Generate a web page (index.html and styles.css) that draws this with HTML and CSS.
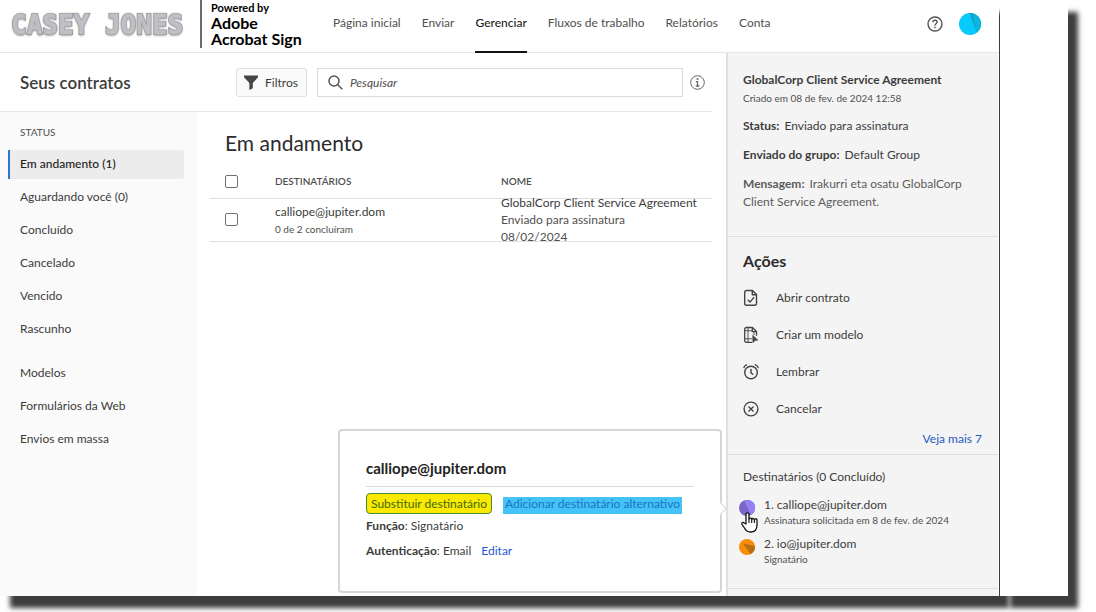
FILE: index.html
```html
<!DOCTYPE html>
<html lang="pt-BR">
<head>
<meta charset="utf-8">
<meta name="viewport" content="width=device-width, initial-scale=1">
<title>Seus contratos</title>
<link rel="stylesheet" href="styles.css">
</head>
<body>
<div class="page">
  <div class="app">
    <header class="topbar">
      <div class="brand">
        <span class="brand-name">CASEY JONES</span>
        <div class="powered"><span class="powered-by">Powered by</span><span>Adobe</span><span>Acrobat Sign</span></div>
      </div>
      <nav class="nav">
        <a href="#">Página inicial</a>
        <a href="#">Enviar</a>
        <a href="#" class="active">Gerenciar</a>
        <a href="#">Fluxos de trabalho</a>
        <a href="#">Relatórios</a>
        <a href="#">Conta</a>
      </nav>
      <div class="account">
        <button class="plain" aria-label="Ajuda">
          <svg width="16" height="16" viewBox="0 0 16 16" fill="none" stroke="#555" stroke-width="1.4"><circle cx="8" cy="8" r="7"/><path d="M5.9 6.3c0-1.3.9-2.1 2.1-2.1s2.1.8 2.1 1.9c0 1.5-2.1 1.7-2.1 3.3"/><path d="M8 10.8v1.5"/></svg>
        </button>
        <button class="plain" aria-label="Perfil">
          <svg width="22" height="22" viewBox="0 0 22 22"><circle cx="11" cy="11" r="11" fill="#04cbfb"/><path d="M10 0A11 11 0 0 1 18 19.400Z" fill="#12a5c9"/><path d="M14 .4A11 11 0 0 1 18 19.400Z" fill="#0bb6e0"/></svg>
        </button>
      </div>
    </header>

    <div class="workspace">
      <div class="subhead">
        <h1>Seus contratos</h1>
        <button class="filter">
          <svg width="14" height="15" viewBox="0 0 14 15"><path d="M0 .5h14v1.700L8.800 8v5.200L5.400 15V8L0 2.200z" fill="#444"/></svg>
          Filtros
        </button>
        <label class="search">
          <svg width="15" height="15" viewBox="0 0 15 15" fill="none" stroke="#555" stroke-width="1.500"><circle cx="6" cy="6" r="5"/><path d="M9.700 9.700l4.600 4.600"/></svg>
          <input type="text" placeholder="Pesquisar" aria-label="Pesquisar">
        </label>
        <button class="plain" aria-label="Informações">
          <svg width="15" height="15" viewBox="0 0 15 15" fill="none" stroke="#666"><circle cx="7.500" cy="7.500" r="6.800"/><path d="M7.500 3.200v1.700" stroke-width="1.700"/><path d="M5.900 6.600h1.600v4.200M5.700 11h3.600" stroke-width="1.300"/></svg>
        </button>
      </div>

      <div class="columns">
        <aside class="sidebar">
          <h2>STATUS</h2>
          <ul>
            <li><a href="#" class="current">Em andamento (1)</a></li>
            <li><a href="#">Aguardando você (0)</a></li>
            <li><a href="#">Concluído</a></li>
            <li><a href="#">Cancelado</a></li>
            <li><a href="#">Vencido</a></li>
            <li><a href="#">Rascunho</a></li>
          </ul>
          <ul>
            <li><a href="#">Modelos</a></li>
            <li><a href="#">Formulários da Web</a></li>
            <li><a href="#">Envios em massa</a></li>
          </ul>
        </aside>

        <main class="list">
          <h2>Em andamento</h2>
          <table>
            <thead>
              <tr>
                <th class="pick"><input type="checkbox" aria-label="Selecionar todos"></th>
                <th class="who">DESTINATÁRIOS</th>
                <th>NOME</th>
              </tr>
            </thead>
            <tbody>
              <tr>
                <td class="pick"><input type="checkbox" aria-label="Selecionar contrato"></td>
                <td class="who"><div class="cell"><span>calliope@jupiter.dom</span><small>0 de 2 concluíram</small></div></td>
                <td><div class="cell name"><span>GlobalCorp Client Service Agreement</span><span class="dim">Enviado para assinatura</span><span class="dim">08/02/2024</span></div></td>
              </tr>
            </tbody>
          </table>
        </main>
      </div>
    </div>

    <aside class="details">
      <section class="summary">
        <h2>GlobalCorp Client Service Agreement</h2>
        <p class="created">Criado em 08 de fev. de 2024 12:58</p>
        <p><b>Status:</b> Enviado para assinatura</p>
        <p><b>Enviado do grupo:</b> Default Group</p>
        <p class="message"><b>Mensagem:</b> Irakurri eta osatu GlobalCorp Client Service Agreement.</p>
      </section>
      <section class="actions">
        <h2>Ações</h2>
        <button>
          <svg width="16" height="18" viewBox="0 0 16 18" fill="none" stroke="#444" stroke-width="1.400" stroke-linejoin="round"><path d="M3.500 1.500h6l4 4v9.200a1.600 1.600 0 0 1-1.600 1.600H3.300a1.600 1.600 0 0 1-1.600-1.600V3.200a1.700 1.700 0 0 1 1.800-1.700z"/><path d="M9.300 1.700v4h4M4.700 10.700l2.300 2.400 4-4.800"/></svg>
          Abrir contrato
        </button>
        <button>
          <svg width="16" height="18" viewBox="0 0 16 18" fill="none" stroke="#444" stroke-width="1.300" stroke-linejoin="round"><path d="M9 16.300H3.300a1.600 1.600 0 0 1-1.600-1.600V3.200a1.700 1.700 0 0 1 1.800-1.700h6l4 4v4.300"/><path d="M9.300 1.700v4h4"/><path d="M5 1.700v14.500M1.700 4.700h7.500M1.700 12.800h7.500M11 6v3" stroke-width=".9"/><path d="M9.700 9.200l5.300 5-2.600.1-2.500 2.500z" fill="#444" stroke-width=".6"/></svg>
          Criar um modelo
        </button>
        <button>
          <svg width="16" height="18" viewBox="0 0 16 18" fill="none" stroke="#444" stroke-width="1.400" stroke-linecap="round"><circle cx="8" cy="9.500" r="6.300"/><path d="M8 6.500v3.300l1.800 1.400M.9 4.500C1.300 3.200 2.300 2.200 3.600 1.800M15.100 4.500c-.4-1.300-1.400-2.300-2.700-2.700"/></svg>
          Lembrar
        </button>
        <button>
          <svg width="16" height="18" viewBox="0 0 16 18" fill="none" stroke="#444" stroke-width="1.400"><circle cx="8" cy="9" r="6.900"/><path d="M5.500 6.500l5 5M10.500 6.500l-5 5"/></svg>
          Cancelar
        </button>
        <a href="#" class="more">Veja mais 7</a>
      </section>
      <section class="recipients">
        <h2>Destinatários (0 Concluído)</h2>
        <ul>
          <li>
            <span class="avatar">
              <svg width="16" height="16" viewBox="0 0 16 16"><circle cx="8" cy="8" r="8" fill="#7a66c8"/><path d="M5 .6A8 8 0 0 1 12 15z" fill="#9581f6"/></svg>
              <svg class="pointer" width="17" height="21" viewBox="0 0 17 21"><path d="M5 12V2.300a1.500 1.500 0 0 1 3 0V7a1.400 1.400 0 0 1 2.700.4 1.400 1.400 0 0 1 2.700.5 1.300 1.300 0 0 1 2.600.6V13c0 4.500-2.500 7-6.500 7-3.500 0-4.800-1.500-6-4L1 12.300c-.8-1.700 1.200-2.600 2.200-1.300z" fill="#fff" stroke="#111" stroke-width="1.300" stroke-linejoin="round"/><path d="M8 7v4M10.700 7.500V11M13.400 8v3" stroke="#111" stroke-width="1.100"/></svg>
            </span>
            <div><span>1. calliope@jupiter.dom</span><small>Assinatura solicitada em 8 de fev. de 2024</small></div>
          </li>
          <li>
            <span class="avatar"><svg width="16" height="16" viewBox="0 0 16 16"><circle cx="8" cy="8" r="8" fill="#f68d0b"/><path d="M4 4.500L15.900 7A8 8 0 0 1 11.500 15.200z" fill="#b8700f"/></svg></span>
            <div><span>2. io@jupiter.dom</span><small>Signatário</small></div>
          </li>
        </ul>
      </section>
    </aside>

    <div class="popover" role="dialog" aria-label="calliope@jupiter.dom">
      <h2>calliope@jupiter.dom</h2>
      <div class="choices">
        <button class="replace">Substituir destinatário</button>
        <button class="alternate">Adicionar destinatário alternativo</button>
      </div>
      <p><b>Função</b>: Signatário</p>
      <p><b>Autenticação</b>: Email <a href="#">Editar</a></p>
    </div>
  </div>
  <div class="gutter"></div>
</div>
</body>
</html>
```
FILE: styles.css
```css
* { box-sizing: border-box; }
body {
  margin: 0;
  background: #fff;
  color: #3c3c3c;
  font: 12px/18px Lato, "Noto Sans", sans-serif;
}
h1, h2, p, ul { margin: 0; padding: 0; }
ul { list-style: none; }
a { color: inherit; text-decoration: none; }
button, input { font: inherit; color: inherit; margin: 0; }
button { cursor: pointer; }
svg { display: block; flex: none; }
b { font-weight: 700; }
small { font-size: 10px; line-height: 14px; color: #505050; }
.plain { padding: 0; border: 0; background: none; }

.page { display: flex; min-height: 100vh; padding: 0 28px 16px 0; overflow: hidden; }
.app {
  position: relative;
  flex: 1;
  display: grid;
  grid-template-columns: 1fr 273px;
  grid-template-rows: 53px 1fr;
  background: #fff;
  box-shadow: 10px 12px 5px #3d3d3d;
}
.gutter {
  position: relative;
  width: 68px;
  margin-left: 1px;
  background: #fff;
  box-shadow: 10px 12px 5px #3d3d3d;
}

.topbar {
  grid-column: 1 / -1;
  display: flex;
  align-items: stretch;
  border-bottom: 1px solid #e6e6e6;
}
.brand { display: flex; align-items: flex-start; width: 333px; padding-left: 11px; }
.brand-name {
  width: 189px;
  padding-top: 6px;
  font: bold 26px/38px "DejaVu Sans Mono", monospace;
  white-space: nowrap;
  color: #c0c0c4;
  -webkit-text-stroke: 2px #8c8c90;
  paint-order: stroke fill;
  text-shadow: 0 -1px 2px #bbb, 0 2px 2px #aaa;
}
.powered {
  display: flex;
  flex-direction: column;
  height: 48px;
  padding-left: 9px;
  border-left: 2px solid #6a6a6a;
  font-size: 16px;
  font-weight: 700;
  line-height: 16px;
  color: #000;
}
.powered-by { font-size: 11px; line-height: 15px; }
.nav { display: flex; gap: 21px; color: #505050; white-space: nowrap; }
.nav a { height: 53px; padding-top: 14px; border-bottom: 2px solid transparent; }
.nav .active { color: #222; border-color: #111; font-weight: 500; }
.account { display: flex; align-items: center; gap: 16px; margin-left: auto; padding: 0 18px 5px 0; }

.workspace { display: flex; flex-direction: column; min-width: 0; }
.subhead {
  display: flex;
  align-items: center;
  height: 59px;
  margin-right: 14px;
  padding: 1px 7px 0 0;
  border-bottom: 1px solid #e6e6e6;
}
.subhead h1 { width: 236px; padding-left: 20px; font-size: 17px; font-weight: 600; color: #3c3c3c; }
.filter {
  display: flex;
  align-items: center;
  gap: 7px;
  height: 29px;
  padding: 0 8px 0 7px;
  border: 1px solid #e0e0e0;
  border-radius: 3px;
  background: #fafafa;
}
.search {
  flex: 1;
  display: flex;
  align-items: center;
  gap: 7px;
  height: 29px;
  margin: 0 7px 0 10px;
  padding-left: 10px;
  border: 1px solid #dcdcdc;
}
.search input { flex: 1; min-width: 0; padding: 0; border: 0; outline: 0; background: none; }
.search input::placeholder { color: #505050; font-style: italic; opacity: 1; }

.columns { flex: 1; display: flex; }
.sidebar { width: 197px; padding: 11px 13px 0 8px; background: #fafafa; }
.sidebar h2 { padding-left: 12px; margin-bottom: 9px; font-size: 10px; font-weight: 500; line-height: 18px; color: #5c5c5c; }
.sidebar ul { display: flex; flex-direction: column; gap: 4px; margin-bottom: 15px; }
.sidebar li a {
  display: block;
  padding: 5px 0 6px 10px;
  border-left: 2px solid transparent;
}
.sidebar .current { border-color: #2f76d2; border-radius: 0 3px 3px 0; background: #ececec; color: #222; font-weight: 500; }
.list { flex: 1; padding: 17px 14px 0 13px; }
.list h2 { padding-left: 15px; font-size: 21px; font-weight: 400; line-height: 28px; color: #2c2c2c; }
.list table { width: 100%; margin-top: 8px; border-collapse: collapse; }
.list th { height: 33px; padding: 0; text-align: left; font-size: 10px; font-weight: 600; color: #505050; border-bottom: 1px solid #e0e0e0; }
.list td { padding: 0; border-bottom: 1px solid #e0e0e0; }
.list .pick { width: 65px; padding-left: 15px; }
.who { width: 226px; }
.list input {
  display: block;
  appearance: none;
  width: 13px;
  height: 13px;
  border: 1px solid #707070;
  border-radius: 2px;
  background: #fff;
}
.cell { display: flex; flex-direction: column; justify-content: center; height: 42px; line-height: 18px; white-space: nowrap; }
.cell small { line-height: 16px; }
.name { line-height: 17px; }
.dim { color: #505050; }

.details { margin-right: 1px; border-left: 2px solid #e0e0e0; background: #f4f4f4; }
.summary { min-height: 184px; padding: 18px 20px 0 15px; border-bottom: 1px solid #dedede; }
.summary h2 { font-size: 12px; font-weight: 700; white-space: nowrap; }
.summary p { margin-bottom: 11px; }
.summary b { margin-right: 2px; }
.summary .created { margin-bottom: 10px; font-size: 10px; color: #505050; }
.summary .message { color: #5c5c5c; }
.actions { display: flex; flex-direction: column; height: 218px; padding: 12px 16px 0 15px; border-bottom: 1px solid #dedede; }
.actions h2 { margin-bottom: 6px; font-size: 16px; font-weight: 700; line-height: 24px; color: #2c2c2c; }
.actions button {
  display: flex;
  align-items: center;
  gap: 17px;
  height: 37px;
  padding: 0;
  border: 0;
  background: none;
}
.more { align-self: flex-end; margin-top: 3px; color: #2459bd; }
.recipients { padding: 13px 0 22px 11px; border-bottom: 1px solid #dedede; }
.recipients h2 { margin-bottom: 10px; padding-left: 4px; font-size: 12px; font-weight: 400; }
.recipients ul { display: flex; flex-direction: column; gap: 8px; }
.recipients li { display: flex; gap: 9px; }
.recipients li div { display: flex; flex-direction: column; white-space: nowrap; }
.recipients li div span { line-height: 17px; }
.avatar { position: relative; padding-top: 4px; }
.pointer { position: absolute; left: 2px; top: 16px; }

.popover {
  position: absolute;
  right: 277px;
  bottom: 3px;
  width: 384px;
  height: 164px;
  padding: 26px 26px 0;
  border: 2px solid #d6d6d6;
  border-radius: 4px;
  background: #fff;
}
.popover::after {
  content: "";
  position: absolute;
  right: -5px;
  top: 73px;
  width: 8px;
  height: 8px;
  border: solid #d6d6d6;
  border-width: 1px 1px 0 0;
  background: #fff;
  transform: rotate(45deg);
}
.popover h2 { padding-bottom: 7px; border-bottom: 1px solid #dadada; font-size: 15px; font-weight: 700; line-height: 22px; color: #222; }
.choices { display: flex; gap: 11px; margin: 6px 0 3px; }
.choices button { padding: 0 4px; white-space: nowrap; line-height: 18px; }
.replace { height: 21px; border: 1px solid #4b8a35; border-radius: 4px; background: #fbe900; color: #3e6a10; }
.alternate { height: 17px; margin-top: 4px; border: 0; background: #44c3f8; color: #1c74c4; }
.choices .alternate { padding: 0 2px 3px; line-height: 14px; }
.popover p { margin-bottom: 7px; }
.popover a { margin-left: 7px; color: #2459d6; }
```
